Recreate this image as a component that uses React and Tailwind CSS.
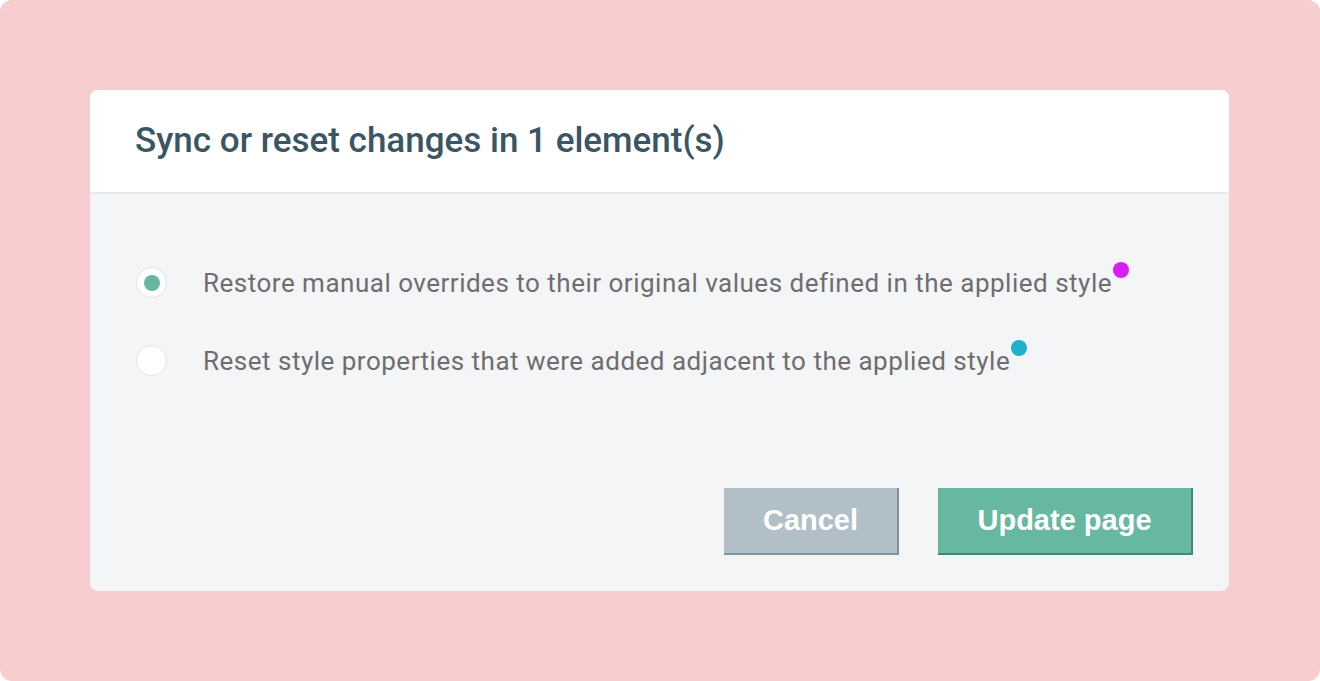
import React from "react";

function Radio({ checked }) {
  return (
    <span className="flex h-[31px] w-[31px] shrink-0 items-center justify-center rounded-full border border-[#e4e4e4] bg-white">
      {checked && <span className="h-[16px] w-[16px] rounded-full bg-[#66b7a0]" />}
    </span>
  );
}

function Option({ checked, label, dot }) {
  return (
    <label className="flex items-center gap-[36px] pl-[46px]">
      <Radio checked={checked} />
      <span className="relative text-[26px] leading-[30px] tracking-[0.5px] text-[#6e6e6e]">
        {label}
        <span className={"absolute -right-[17px] -top-[6px] h-[16px] w-[16px] rounded-full " + dot} />
      </span>
    </label>
  );
}

export default function App() {
  return (
    <div className="bg-white">
      <div className="flex h-[681px] w-[1320px] rounded-[12px] bg-[#f7cdcf] pl-[90px] pt-[90px] font-['Roboto',sans-serif]">
        <div className="flex h-[501px] w-[1139px] flex-col overflow-hidden rounded-[8px] bg-[#f4f5f7]">
          <div className="flex h-[104px] shrink-0 items-center border-b-2 border-[#e6e8eb] bg-white pl-[45px]">
            <h1 className="text-[35px] font-medium text-[#3a5563]">
              Sync or reset changes in 1 element(s)
            </h1>
          </div>
          <div className="flex flex-1 flex-col pt-[73px]">
            <div className="flex flex-col gap-[47px]">
              <Option
                checked
                label="Restore manual overrides to their original values defined in the applied style"
                dot="bg-[#d91ff0]"
              />
              <Option
                label="Reset style properties that were added adjacent to the applied style"
                dot="bg-[#1fb0cb]"
              />
            </div>
            <div className="mt-auto flex justify-end gap-[39px] pb-[36px] pr-[36px] font-['Liberation_Sans',Arial,sans-serif]">
              <button className="h-[67px] w-[175px] border-b-2 border-r-2 border-[#7f949d] bg-[#b1bfc6] text-[29px] font-bold text-white">
                Cancel
              </button>
              <button className="h-[67px] w-[255px] border-b-2 border-r-2 border-[#3f8a74] bg-[#67b8a1] text-[29px] font-bold text-white">
                Update page
              </button>
            </div>
          </div>
        </div>
      </div>
    </div>
  );
}
